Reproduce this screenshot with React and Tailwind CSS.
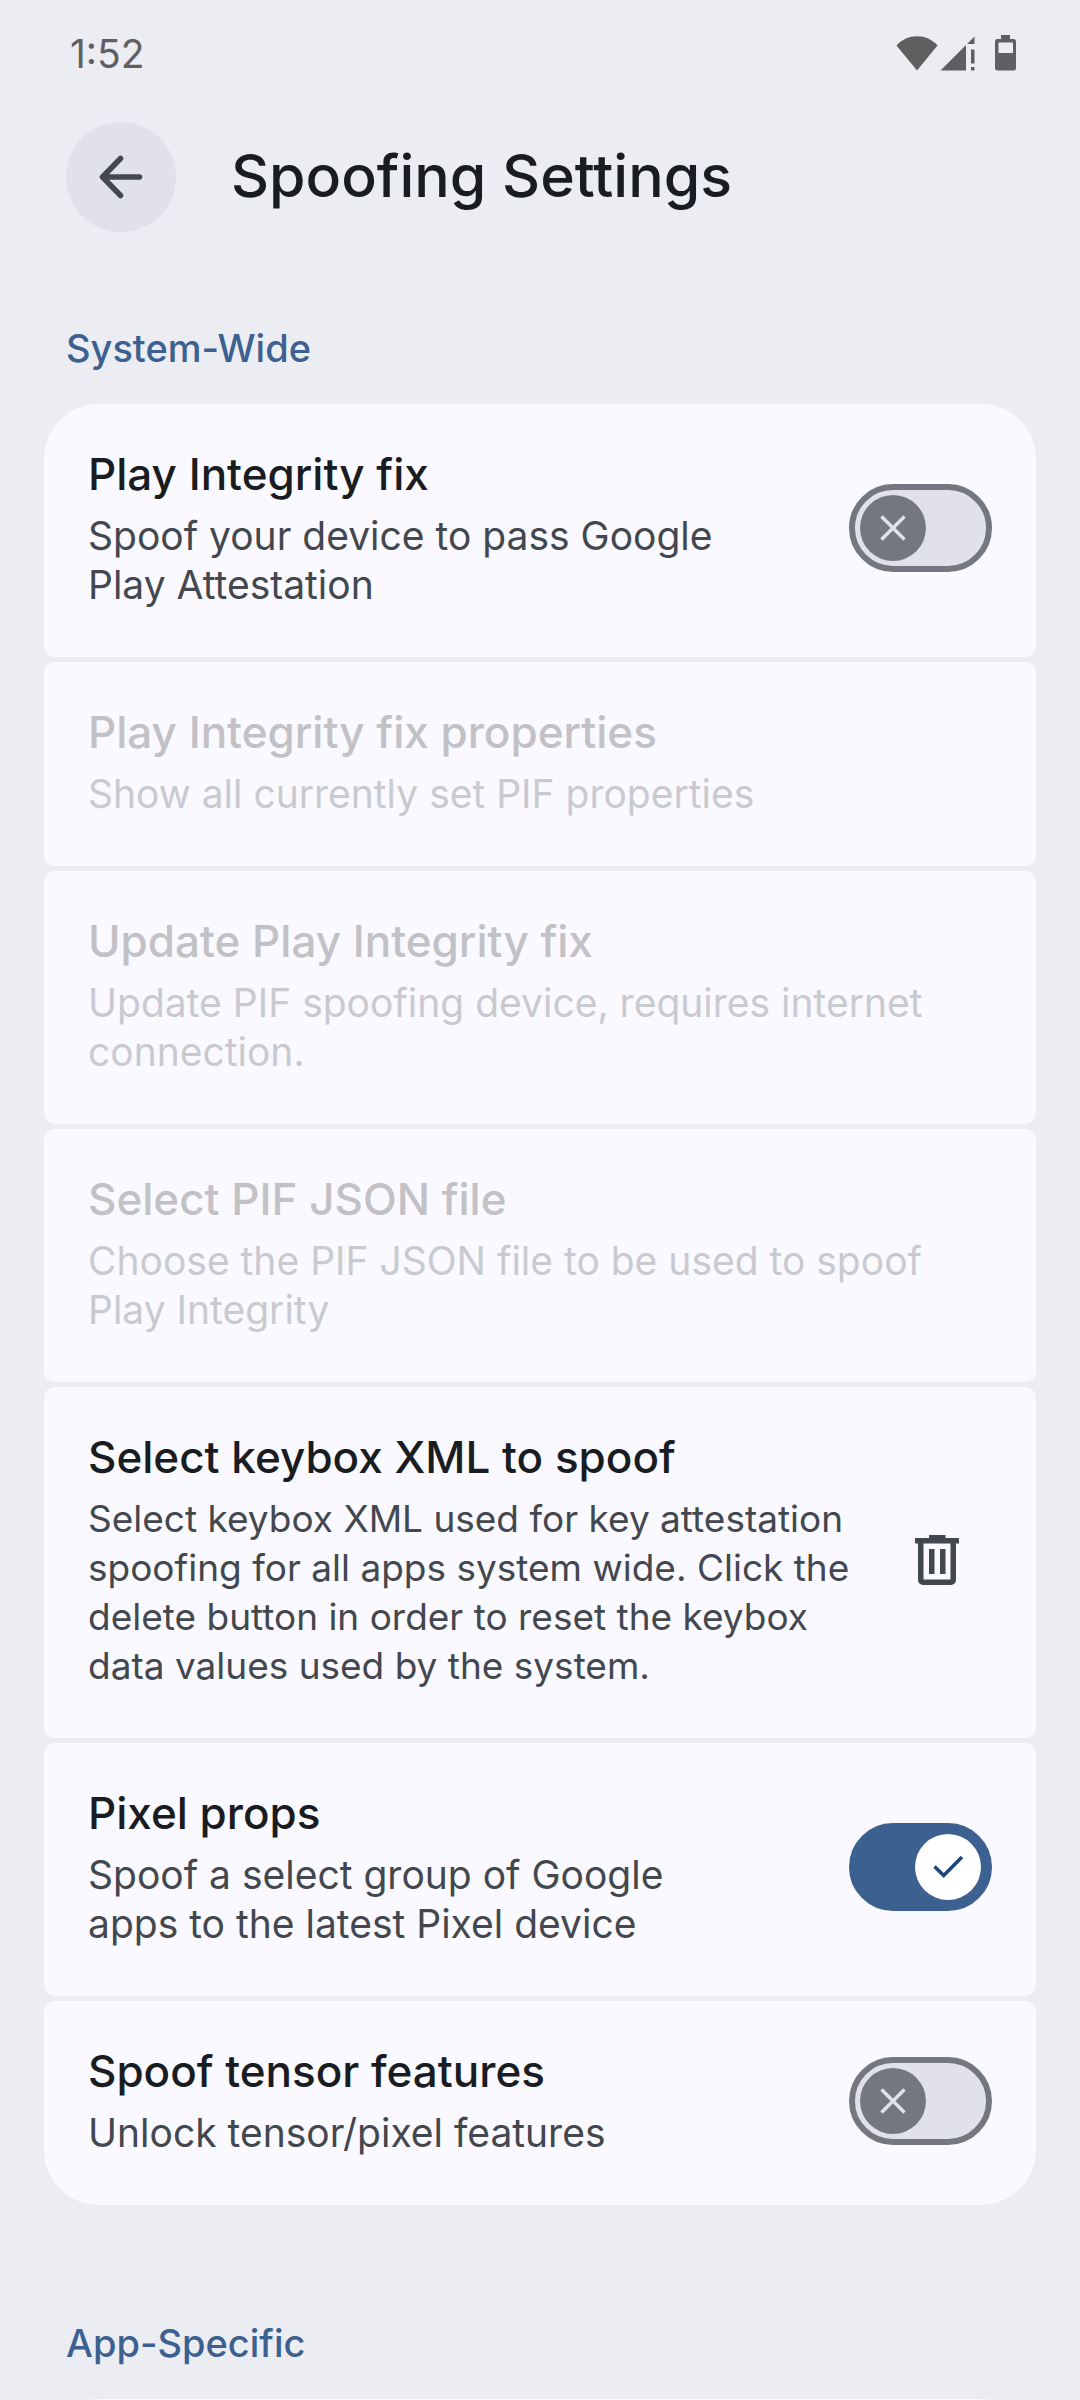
import { useId, useState } from "react";

function StatusBar() {
  return (
    <div className="flex h-[106px] items-center justify-between pl-[70px] pr-16 text-[#5f5f62]">
      <time className="text-[39px] leading-none">1:52</time>
      <div className="flex items-center" aria-label="Wi-Fi, mobile signal, battery" role="img">
        <svg width="42" height="36" viewBox="0 0 42 36" fill="currentColor">
          <path d="M0.5 10.5C6 4.500 13 1.300 21 1.300S36 4.500 41.500 10.500L21 35.500Z" />
        </svg>
        <svg className="ml-0.5" width="36" height="36" viewBox="0 0 36 36" fill="currentColor">
          <path d="M0.500 35.500L26 10V35.500ZM27 9L34.500 1.500V9Z" />
          <path d="M31 14.500H34.500V28.500H31ZM31 32H34.500V35.500H31Z" />
        </svg>
        <svg className="ml-[19px]" width="21" height="36" viewBox="0 0 21 36" fill="currentColor">
          <path
            fillRule="evenodd"
            d="M6 0H15V4H18.500A2.500 2.500 0 0 1 21 6.500V33A2.500 2.500 0 0 1 18.500 35.500H2.500A2.500 2.500 0 0 1 0 33V6.500A2.500 2.500 0 0 1 2.500 4H6ZM3.500 7.500V18H18V7.500Z"
          />
        </svg>
      </div>
    </div>
  );
}

function Header() {
  return (
    <header className="flex items-center gap-[55px] px-[66px] pt-4">
      <button
        type="button"
        aria-label="Back"
        className="flex size-[110px] shrink-0 items-center justify-center rounded-full bg-[#e1e2e9] text-[#43474e]"
      >
        <svg width="44" height="44" viewBox="0 0 44 44" fill="none" stroke="currentColor" strokeWidth="5.500" strokeLinecap="round" strokeLinejoin="round">
          <path d="M21.500 3.500L3.500 22L21.500 40.500M4 22H40.500" />
        </svg>
      </button>
      <h1 className="pb-0.5 text-[59px] leading-[80px] font-medium text-[#191c20]">Spoofing Settings</h1>
    </header>
  );
}

function Switch({ id, descId, defaultOn }) {
  const [on, setOn] = useState(defaultOn);
  return (
    <span className="relative block h-[88px] w-[143px] shrink-0">
      <input
        id={id}
        type="checkbox"
        role="switch"
        aria-describedby={descId}
        checked={on}
        onChange={(e) => setOn(e.target.checked)}
        className="block size-full cursor-pointer appearance-none rounded-full border-[6px] border-[#74777f] bg-[#e1e2e9] checked:border-[#3c6090] checked:bg-[#3c6090]"
      />
      {on ? (
        <span className="pointer-events-none absolute top-[11px] right-[11px] flex size-[66px] items-center justify-center rounded-full bg-white">
          <svg width="34" height="34" viewBox="0 0 34 34" fill="none" stroke="#204876" strokeWidth="3.600">
            <path d="M3.500 16.500L12.700 25.500L31 7" />
          </svg>
        </span>
      ) : (
        <span className="pointer-events-none absolute top-[11px] left-[11px] flex size-[66px] items-center justify-center rounded-full bg-[#74777f]">
          <svg width="30" height="30" viewBox="0 0 30 30" fill="none" stroke="#e1e2e9" strokeWidth="3.400">
            <path d="M3.500 3.500L26.500 26.500M26.500 3.500L3.500 26.500" />
          </svg>
        </span>
      )}
    </span>
  );
}

function DeleteButton() {
  return (
    <button type="button" aria-label="Delete keybox" className="flex size-[110px] shrink-0 items-center justify-center text-[#43474e]">
      <svg width="44" height="50" viewBox="0 0 44 50" fill="currentColor">
        <path
          fillRule="evenodd"
          d="M14 0H30.500V3H44V8.500H41V45A5 5 0 0 1 36 50H8A5 5 0 0 1 3 45V8.500H0V3H14ZM8.500 8.500V44.500H35.500V8.500Z"
        />
        <path d="M14 14H19.500V39H14ZM25 14H30.500V39H25Z" />
      </svg>
    </button>
  );
}

const columnPadding = { switch: "pr-28", delete: "pr-6" };

function Row({ title, text, kind, on, disabled }) {
  const id = useId();
  const descId = id + "-text";
  const isSwitch = kind === "switch";
  const Title = isSwitch ? "label" : "h3";
  return (
    <li
      aria-disabled={disabled || undefined}
      className="flex items-center rounded-[11px] bg-[#faf9ff] px-11 pt-[43px] pb-12 first:rounded-t-[55px] last:rounded-b-[55px]"
    >
      <div className={"min-w-0 flex-1 " + (columnPadding[kind] ?? "")}>
        <Title
          htmlFor={isSwitch ? id : undefined}
          className={"block text-[44px] leading-[55px] font-medium " + (disabled ? "text-[#c1c1c6]" : "text-[#191c20]")}
        >
          {title}
        </Title>
        <p
          id={descId}
          className={
            "mt-[9px] leading-[49px] " +
            (kind === "delete" ? "text-[37px] " : "text-[39px] ") +
            (disabled ? "text-[#c9cacf]" : "text-[#43474e]")
          }
        >
          {text}
        </p>
      </div>
      {isSwitch && <Switch id={id} descId={descId} defaultOn={on} />}
      {kind === "delete" && <DeleteButton />}
    </li>
  );
}

const systemRows = [
  { title: "Play Integrity fix", text: "Spoof your device to pass Google Play Attestation", kind: "switch", on: false },
  { title: "Play Integrity fix properties", text: "Show all currently set PIF properties", disabled: true },
  { title: "Update Play Integrity fix", text: "Update PIF spoofing device, requires internet connection.", disabled: true },
  { title: "Select PIF JSON file", text: "Choose the PIF JSON file to be used to spoof Play Integrity", disabled: true },
  {
    title: "Select keybox XML to spoof",
    text: "Select keybox XML used for key attestation spoofing for all apps system wide. Click the delete button in order to reset the keybox data values used by the system.",
    kind: "delete",
  },
  { title: "Pixel props", text: "Spoof a select group of Google apps to the latest Pixel device", kind: "switch", on: true },
  { title: "Spoof tensor features", text: "Unlock tensor/pixel features", kind: "switch", on: false },
];

function SectionTitle({ children }) {
  return <h2 className="px-[22px] pb-[31px] text-[38px] leading-[49px] font-medium text-[#3c6090]">{children}</h2>;
}

export default function App() {
  return (
    <div className="h-screen overflow-hidden bg-[#ecedf3] font-['Inter',sans-serif]">
      <StatusBar />
      <Header />
      <main className="px-11">
        <section className="pt-[92px]">
          <SectionTitle>System-Wide</SectionTitle>
          <ul className="flex flex-col gap-[5px]">
            {systemRows.map((row) => (
              <Row key={row.title} {...row} />
            ))}
          </ul>
        </section>
        <section className="pt-[114px]">
          <SectionTitle>App-Specific</SectionTitle>
          <div className="h-[200px] rounded-t-[55px] bg-[#faf9ff]" />
        </section>
      </main>
    </div>
  );
}
